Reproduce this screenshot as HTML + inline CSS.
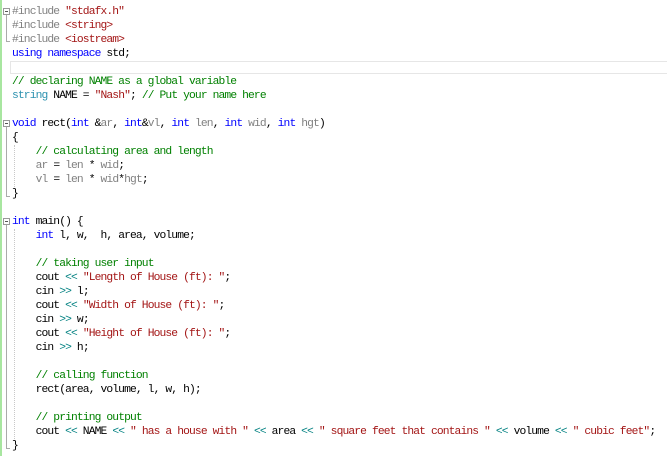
<!DOCTYPE html><html><head><style>
body{margin:0;width:667px;height:462px;background:#fff;position:relative;overflow:hidden}
.g{position:absolute;left:0;top:0;width:2px;height:456px;background:#a8e6a0}
.l{position:absolute;left:12px;height:14px;line-height:14px;white-space:pre;font-family:"Liberation Mono",monospace;font-size:11.3px;letter-spacing:-0.88px;color:#000;margin-top:2px}
.k{color:#0000ff}.c{color:#008000}.s{color:#a31515}.p{color:#808080}.t{color:#2b91af}.o{color:#008080}.m{color:#808080}
.fb{position:absolute;left:3px;width:7px;height:7px;border:1px solid #999;background:#fff;box-sizing:border-box}
.fb:after{content:"";position:absolute;left:1px;top:2px;width:3px;height:1px;background:#555}
.fl{position:absolute;left:6px;width:1px;background:#aaa}
.fe{position:absolute;left:6px;width:4px;height:1px;background:#aaa}
.ig{position:absolute;left:14px;width:0;border-left:1px dotted #c8c8c8}
.cur{position:absolute;left:10px;top:61px;width:660px;height:13px;border:1px solid #e6e6e6;box-sizing:border-box}
</style></head><body>
<div class="g"></div>
<div class="cur"></div>
<div class="fb" style="top:8px"></div><div class="fl" style="top:15px;height:26px"></div><div class="fe" style="top:41px"></div>
<div class="fb" style="top:120px"></div><div class="fl" style="top:127px;height:69px"></div><div class="fe" style="top:196px"></div>
<div class="fb" style="top:218px"></div><div class="fl" style="top:225px;height:223px"></div><div class="fe" style="top:448px"></div>
<div class="ig" style="top:145px;height:44px"></div>
<div class="ig" style="top:229px;height:212px"></div>
<div class="l" style="top:3px"><span class="p">#include </span><span class="s">"stdafx.h"</span></div>
<div class="l" style="top:17px"><span class="p">#include </span><span class="s">&lt;string&gt;</span></div>
<div class="l" style="top:31px"><span class="p">#include </span><span class="s">&lt;iostream&gt;</span></div>
<div class="l" style="top:45px"><span class="k">using namespace</span> std;</div>
<div class="l" style="top:73px"><span class="c">// declaring NAME as a global variable</span></div>
<div class="l" style="top:87px"><span class="t">string</span> NAME = <span class="s">"Nash"</span>; <span class="c">// Put your name here</span></div>
<div class="l" style="top:115px"><span class="k">void</span> rect(<span class="k">int</span> &amp;<span class="m">ar</span>, <span class="k">int</span>&amp;<span class="m">vl</span>, <span class="k">int</span> <span class="m">len</span>, <span class="k">int</span> <span class="m">wid</span>, <span class="k">int</span> <span class="m">hgt</span>)</div>
<div class="l" style="top:129px">{</div>
<div class="l" style="top:143px">    <span class="c">// calculating area and length</span></div>
<div class="l" style="top:157px">    <span class="m">ar</span> = <span class="m">len</span> * <span class="m">wid</span>;</div>
<div class="l" style="top:171px">    <span class="m">vl</span> = <span class="m">len</span> * <span class="m">wid</span>*<span class="m">hgt</span>;</div>
<div class="l" style="top:185px">}</div>
<div class="l" style="top:213px"><span class="k">int</span> main() {</div>
<div class="l" style="top:227px">    <span class="k">int</span> l, w,  h, area, volume;</div>
<div class="l" style="top:255px">    <span class="c">// taking user input</span></div>
<div class="l" style="top:269px">    cout <span class="o">&lt;&lt;</span> <span class="s">"Length of House (ft): "</span>;</div>
<div class="l" style="top:283px">    cin <span class="o">&gt;&gt;</span> l;</div>
<div class="l" style="top:297px">    cout <span class="o">&lt;&lt;</span> <span class="s">"Width of House (ft): "</span>;</div>
<div class="l" style="top:311px">    cin <span class="o">&gt;&gt;</span> w;</div>
<div class="l" style="top:325px">    cout <span class="o">&lt;&lt;</span> <span class="s">"Height of House (ft): "</span>;</div>
<div class="l" style="top:339px">    cin <span class="o">&gt;&gt;</span> h;</div>
<div class="l" style="top:367px">    <span class="c">// calling function</span></div>
<div class="l" style="top:381px">    rect(area, volume, l, w, h);</div>
<div class="l" style="top:409px">    <span class="c">// printing output</span></div>
<div class="l" style="top:423px">    cout <span class="o">&lt;&lt;</span> NAME <span class="o">&lt;&lt;</span> <span class="s">" has a house with "</span> <span class="o">&lt;&lt;</span> area <span class="o">&lt;&lt;</span> <span class="s">" square feet that contains "</span> <span class="o">&lt;&lt;</span> volume <span class="o">&lt;&lt;</span> <span class="s">" cubic feet"</span>;</div>
<div class="l" style="top:437px">}</div>
</body></html>
